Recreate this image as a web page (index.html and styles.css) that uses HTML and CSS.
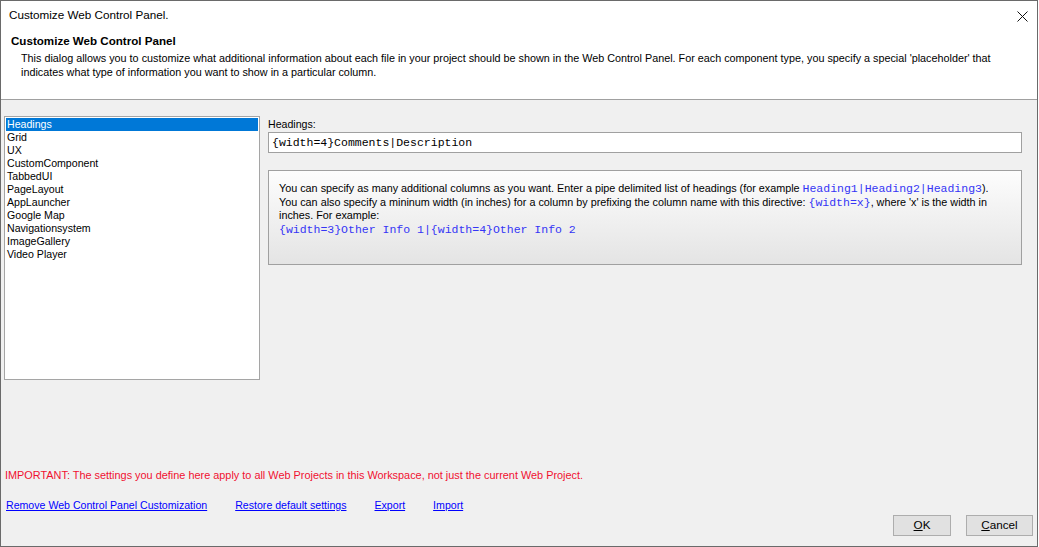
FILE: index.html
```html
<!DOCTYPE html>
<html lang="en">
<head>
  <meta charset="UTF-8">
  <title>Customize Web Control Panel.</title>
  <link rel="stylesheet" href="styles.css">
</head>
<body>
  <div class="dialog" role="dialog" aria-labelledby="dlgTitle">

    <!-- Title bar + intro share the white header -->
    <div class="header">
      <div class="titlebar">
        <span id="dlgTitle">Customize Web Control Panel.</span>
        <button class="close" aria-label="Close">
          <svg width="11" height="11" viewBox="0 0 11 11">
            <path d="M0.5 0.5 L10.5 10.5 M10.5 0.5 L0.5 10.5" stroke="#111" stroke-width="1" fill="none"/>
          </svg>
        </button>
      </div>
      <h1 class="intro-title">Customize Web Control Panel</h1>
      <p class="intro-text">This dialog allows you to customize what additional information about each file in your project should be shown in the Web Control Panel. For each component type, you specify a special 'placeholder' that<br>indicates what type of information you want to show in a particular column.</p>
    </div>

    <div class="content">
      <div class="editor">
        <ul class="types" id="typeList">
          <li class="type selected">Headings</li>
          <li class="type">Grid</li>
          <li class="type">UX</li>
          <li class="type">CustomComponent</li>
          <li class="type">TabbedUI</li>
          <li class="type">PageLayout</li>
          <li class="type">AppLauncher</li>
          <li class="type">Google Map</li>
          <li class="type">Navigationsystem</li>
          <li class="type">ImageGallery</li>
          <li class="type">Video Player</li>
        </ul>

        <div class="detail">
          <label class="field-label" id="fieldLabel">Headings:</label>
          <div class="field" aria-labelledby="fieldLabel">{width=4}Comments|Description</div>
          <div class="hint">
            You can specify as many additional columns as you want. Enter a pipe delimited list of headings (for example <code>Heading1|Heading2|Heading3</code>).<br>
            You can also specify a mininum width (in inches) for a column by prefixing the column name with this directive: <code>{width=x}</code>, where 'x' is the width in<br>
            inches. For example:<br>
            <code>{width=3}Other Info 1|{width=4}Other Info 2</code>
          </div>
        </div>
      </div>

      <p class="warning">IMPORTANT: The settings you define here apply to all Web Projects in this Workspace, not just the current Web Project.</p>

      <div class="footer">
        <div class="links">
          <a href="#">Remove Web Control Panel Customization</a>
          <a href="#">Restore default settings</a>
          <a href="#">Export</a>
          <a href="#">Import</a>
        </div>
        <div class="buttons">
          <button class="btn btn-ok"><u>O</u>K</button>
          <button class="btn btn-cancel"><u>C</u>ancel</button>
        </div>
      </div>
    </div>
  </div>

  <script>
    // simple selection handling for the component type list
    const typeList = document.getElementById('typeList');
    typeList.addEventListener('click', (event) => {
      if (event.target.classList.contains('type')) {
        typeList.querySelectorAll('.type').forEach((el) => el.classList.remove('selected'));
        event.target.classList.add('selected');
        document.getElementById('fieldLabel').textContent = event.target.textContent + ':';
      }
    });
  </script>
</body>
</html>
```

FILE: styles.css
```css
body {
  margin: 0;
  background: #ffffff;
  font-family: "Liberation Sans", Arial, sans-serif;
  color: #000;
}
.dialog {
  box-sizing: border-box;
  width: 1038px;
  height: 547px;
  border: 1px solid #6a6a6a;
  background: #f0f0f0;
  display: flex;
  flex-direction: column;
}

/* header */
.header {
  height: 98px;
  background: #fff;
  border-bottom: 1px solid #a0a0a0;
}
.titlebar {
  display: flex;
  justify-content: space-between;
  align-items: center;
  height: 28px;
  padding-left: 8px;
  font-size: 11.7px;
  line-height: 28px;
}
.close {
  border: none;
  background: none;
  padding: 0;
  margin: 3px 9px 0 0;
  width: 11px;
  height: 11px;
  display: block;
}
.close svg {
  display: block;
}
.intro-title {
  margin: 5px 0 0 0;
  padding-left: 10px;
  font-size: 11.6px;
  line-height: 14px;
  font-weight: bold;
}
.intro-text {
  margin: 3px 0 0 0;
  padding-left: 20px;
  font-size: 10.8px;
  line-height: 14px;
  white-space: nowrap;
}

/* main area */
.content {
  flex: 1;
  padding: 16px 4px 0 3px;
  font-size: 10.6px;
  line-height: 13px;
}
.editor {
  display: flex;
  gap: 8px;
  margin-right: 11px;
}
.types {
  list-style: none;
  margin: 0;
  padding: 1px;
  box-sizing: border-box;
  width: 256px;
  height: 264px;
  border: 1px solid #a5a5a5;
  background: #fff;
  flex: none;
}
.type {
  height: 13px;
  padding-left: 1px;
  cursor: default;
}
.type.selected {
  background: #0078d7;
  color: #fff;
}
.detail {
  flex: 1;
  padding-top: 2px;
}
.field-label {
  display: block;
  margin-bottom: 1px;
}
.field {
  box-sizing: border-box;
  height: 21px;
  border: 1px solid #a0a0a0;
  background: #fff;
  padding-left: 3px;
  font-family: "Liberation Mono", "Courier New", monospace;
  font-size: 11.5px;
  line-height: 19px;
  white-space: nowrap;
}
.hint {
  box-sizing: border-box;
  height: 95px;
  margin-top: 17px;
  padding: 11px 10px 0 10px;
  border: 1px solid #a0a0a0;
  background: linear-gradient(#fdfdfd, #e4e4e4);
  font-size: 10.8px;
  line-height: 13.5px;
  white-space: nowrap;
}
.hint code {
  font-family: "Liberation Mono", "Courier New", monospace;
  font-size: 11.5px;
  line-height: 10px;
  color: #3535f5;
}

.warning {
  margin: 89px 0 0 1px;
  font-size: 10.9px;
  color: #f01030;
}

.footer {
  margin-top: 17px;
  display: flex;
  justify-content: space-between;
  padding-left: 2px;
}
.links {
  display: flex;
  gap: 28px;
  align-self: flex-start;
}
.links a {
  color: #0000ff;
  text-decoration: underline;
}
.buttons {
  display: flex;
  gap: 15px;
  margin-top: 16px;
}
.btn {
  box-sizing: border-box;
  height: 21px;
  padding: 0 0 2px 0;
  border: 1px solid #adadad;
  background: #e1e1e1;
  font-family: "Liberation Sans", Arial, sans-serif;
  font-size: 11.7px;
  line-height: 17px;
  color: #000;
}
.btn-ok {
  width: 58px;
}
.btn-cancel {
  width: 67px;
}
```
